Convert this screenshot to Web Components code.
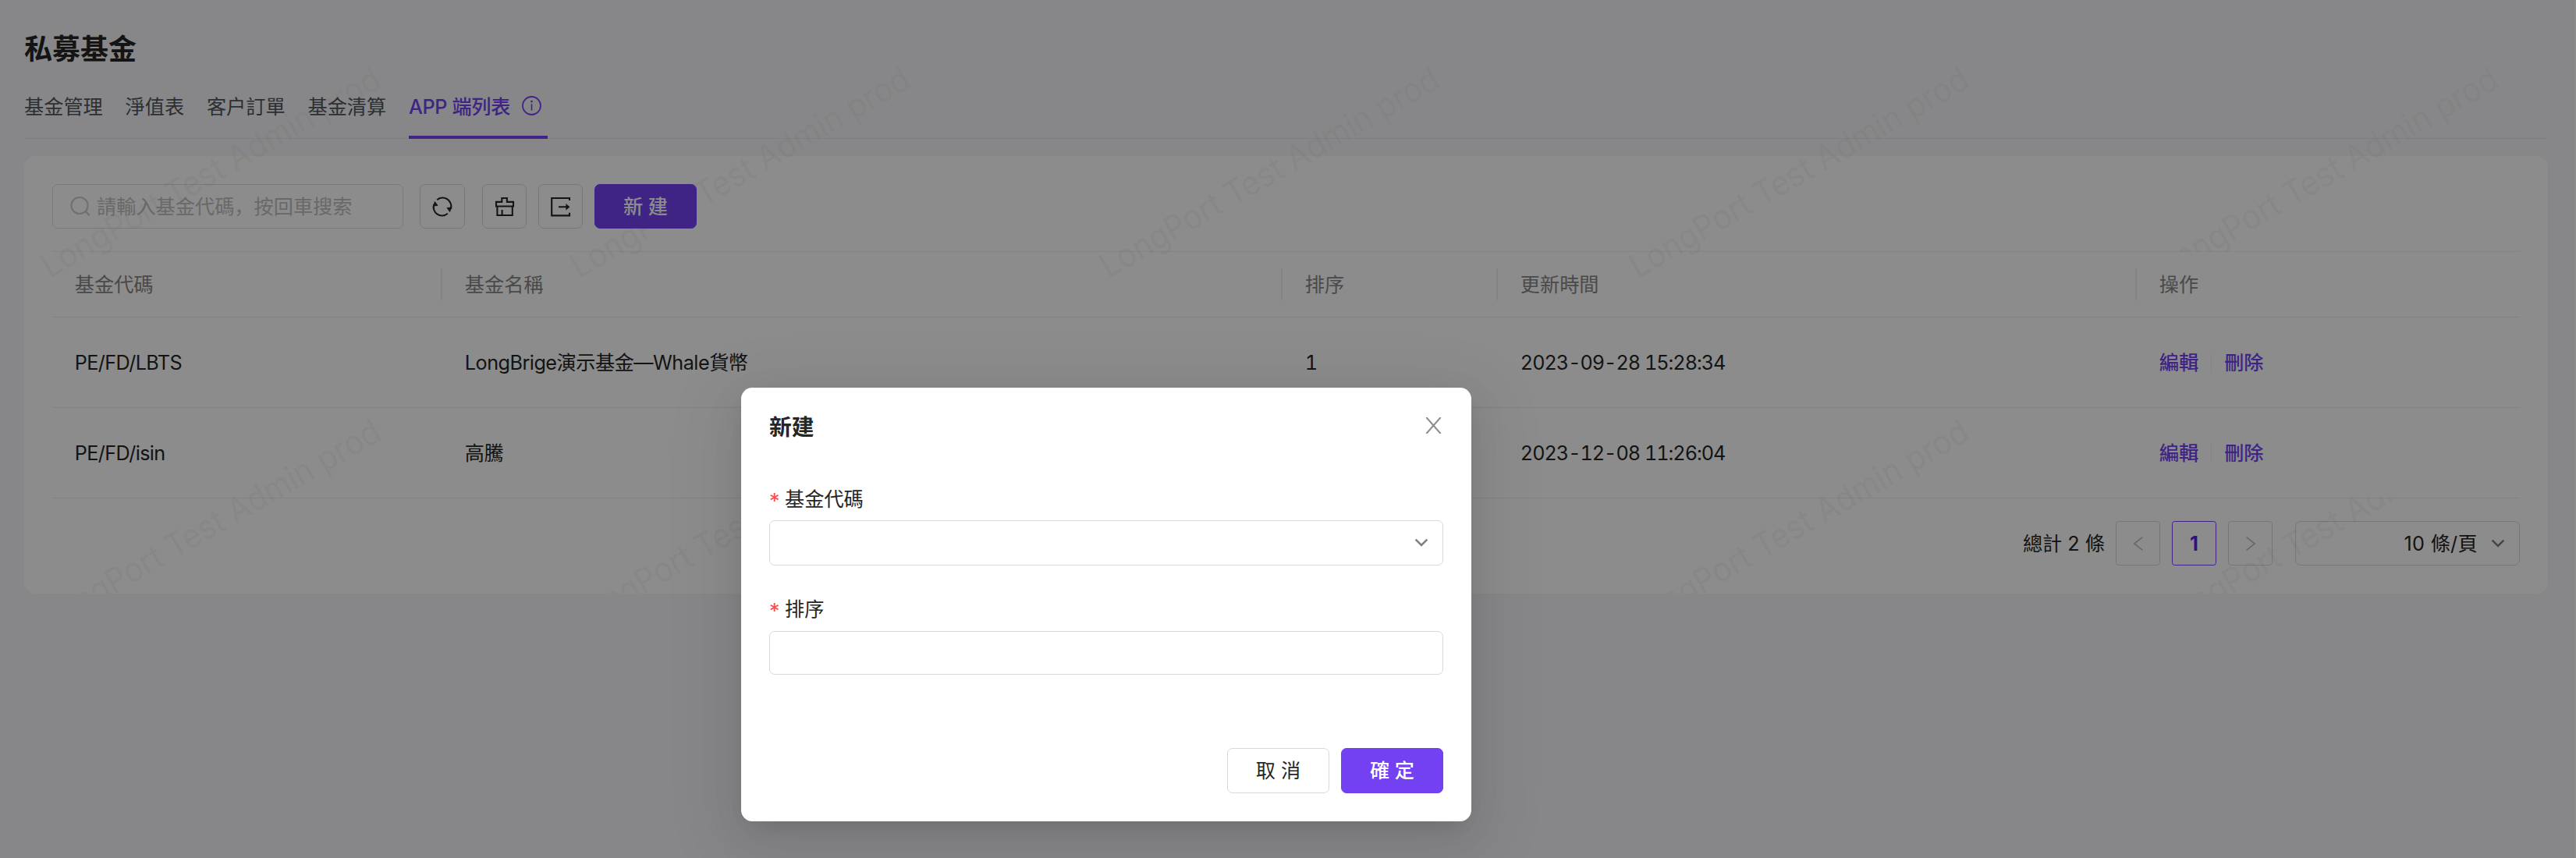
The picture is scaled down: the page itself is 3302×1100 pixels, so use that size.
<!DOCTYPE html>
<html lang="zh">
<head>
<meta charset="utf-8">
<title>私募基金</title>
<style>
  html, body { margin: 0; height: 1100px; overflow: hidden; }
  body {
    width: 3302px;
    background: #f6f6fa;
    color: #262626;
    font: 400 25.2px/40px Inter, "Noto Sans CJK SC", sans-serif;
    --primary: #7341f2;
    --line: #d9d9d9;
    --split: #f0f0f0;
  }
</style>
</head>
<body>
<fund-page></fund-page>
<app-watermark label="LongPort Test Admin prod"></app-watermark>
<modal-dialog heading="新建">
  <form-field label="基金代碼" kind="select"></form-field>
  <form-field label="排序"></form-field>
  <ui-button slot="footer" tall>取 消</ui-button>
  <ui-button slot="footer" tall primary>確 定</ui-button>
</modal-dialog>

<script>
const define = (name, html) => customElements.define(name, class extends HTMLElement {
  constructor() {
    super();
    this.attachShadow({ mode: 'open' });
  }
  connectedCallback() {
    if (this.shadowRoot.firstChild) return;
    this.shadowRoot.innerHTML = typeof html === 'function' ? html(this) : html;
  }
});

const ICONS = {
  search: `<svg width="26" height="26" viewBox="0 0 26 26" fill="none" stroke="currentColor" stroke-width="2"><circle cx="12" cy="12.5" r="10.6"/><path d="M18.8 19.2 24.6 25" stroke-width="2.4"/></svg>`,
  refresh: `<svg width="28" height="28" viewBox="0 0 28 28" fill="none" stroke="currentColor" stroke-width="2.1"><path d="M7.2 5.2A11 11 0 0 1 24.8 17"/><path d="M20.8 22.8A11 11 0 0 1 3.2 11"/><path d="M4.4 7.4 8 12.4 2.4 13.2ZM23.6 20.6 20 15.6 25.6 14.8Z" fill="currentColor" stroke-width=".8"/></svg>`,
  clear: `<svg width="28" height="28" viewBox="0 0 28 28" fill="none" stroke="currentColor" stroke-width="2.1"><path d="M10.3 7.9V3h6.6v4.9H25v5.6H3V7.9ZM4.4 13.5V25h19.4V13.5M10.6 18v7"/></svg>`,
  export: `<svg width="28" height="28" viewBox="0 0 28 28" fill="none" stroke="currentColor" stroke-width="2.1"><path d="M25 6V3H2.2v22.4H25v-3.6M11 14.3h11"/><path d="M20.6 10.4 25.2 14.3 20.6 18.2Z" fill="currentColor" stroke-width=".4"/></svg>`,
  info: `<svg width="25" height="25" viewBox="0 0 25 25" fill="none" stroke="currentColor" stroke-width="1.8"><circle cx="12.5" cy="12.5" r="11.5"/><path d="M12.5 10.2v8.4" stroke-width="1.6"/><circle cx="12.5" cy="7.1" r="1.3" fill="currentColor" stroke="none"/></svg>`,
  down: `<svg width="18" height="12" viewBox="0 0 18 12" fill="none" stroke="currentColor" stroke-width="2.6"><path d="M1.6 1.6 9 9 16.4 1.6"/></svg>`,
  left: `<svg width="14" height="20" viewBox="0 0 14 20" fill="none" stroke="currentColor" stroke-width="1.7"><path d="M12.4 1.6 1.8 10l10.6 8.4"/></svg>`,
  right: `<svg width="14" height="20" viewBox="0 0 14 20" fill="none" stroke="currentColor" stroke-width="1.7"><path d="M1.6 1.6 12.2 10 1.6 18.4"/></svg>`,
  close: `<svg width="21" height="21" viewBox="0 0 21 21" fill="none" stroke="currentColor" stroke-width="2"><path d="M1.3 0 19.7 21M19.7 0 1.3 21"/></svg>`
};

define('ui-icon', el => `<style>:host{display:inline-flex;flex:none}svg{display:block}</style>${ICONS[el.getAttribute('name')]}`);

define('ui-button', `
<style>
  :host { display: flex; align-items: center; justify-content: center; box-sizing: border-box; width: 131px; height: 57px;
    border: 1px solid var(--line); border-radius: 7px; background: #fff; flex: none; white-space: pre; }
  :host([icon]) { width: 57px; }
  :host([tall]) { height: 58px; }
  :host([primary]) { background: var(--primary); border-color: var(--primary); color: #fff; font-weight: 500; }
</style><slot></slot>`);

define('search-box', el => `
<style>
  :host { display: flex; align-items: center; box-sizing: border-box; width: 450px; height: 57px; padding-left: 22px; gap: 8px;
    border: 1px solid #dedede; border-radius: 7px; background: #fff; color: #bfbfbf; }
  ui-icon { color: #c9cad6; margin-top: -1px; }
</style><ui-icon name="search"></ui-icon><span>${el.getAttribute('placeholder')}</span>`);

define('tab-item', `
<style>
  :host { display: flex; align-items: center; box-sizing: border-box; height: 78px; color: #50565c; border-bottom: 4px solid transparent; }
  :host([active]) { width: 178px; color: var(--primary); border-color: var(--primary); font-weight: 500; letter-spacing: -.35px; white-space: nowrap; }
</style><slot></slot>`);

define('tab-bar', `
<style>
  :host { display: flex; gap: 28.8px; height: 78px; box-shadow: inset 0 -1px #e6e6e9; }
</style><slot></slot>`);

define('row-actions', `
<style>
  :host { display: flex; align-items: center; color: var(--primary); font-weight: 500; }
  i { width: 1px; height: 24px; margin: 0 16px; background: var(--split); }
</style><span>編輯</span><i></i><span>刪除</span>`);

define('table-cell', `
<style>
  :host { display: flex; align-items: center; box-sizing: border-box; padding-left: 28.8px; white-space: nowrap; }
  :host([code]) { letter-spacing: -.6px; }
  :host([name]) { letter-spacing: -.5px; }
  :host([num]) { font-variant-numeric: tabular-nums; }
  :host([date]) { font-variant-numeric: tabular-nums; letter-spacing: -1px; }
  :host([op]) { position: relative; z-index: 2; background: #fff; }
  :host([sep])::after { content: ""; width: 2px; height: 41px; margin-left: auto; background: #eeeeee; }
</style><slot></slot>`);

define('table-row', `
<style>
  :host { display: grid; grid-template-columns: 500px 1077px 276px 819px 1fr; height: 115px; border-bottom: 1px solid #ededed; }
  :host([head]) { height: 83px; border-top: 1px solid var(--split); color: #888; }
</style><slot></slot>`);

define('page-pagination', `
<style>
  :host { display: flex; justify-content: flex-end; align-items: center; height: 57px; margin-top: 29px; }
  .total { margin-right: 14px; }
  .pg { display: flex; align-items: center; justify-content: center; box-sizing: border-box; width: 57px; height: 57px;
    margin-right: 15px; border: 1px solid var(--line); border-radius: 3.6px; color: #bfbfbf; }
  .on { border-color: var(--primary); color: #5722f0; font-weight: 700; }
  .size { display: flex; align-items: center; justify-content: flex-end; box-sizing: border-box; width: 288px; height: 57px;
    margin-left: 14px; padding-right: 18px; gap: 17px; border: 1px solid var(--line); border-radius: 7px; letter-spacing: .3px; }
  .size ui-icon { color: #808080; }
</style>
<span class="total">總計 2 條</span>
<span class="pg"><ui-icon name="left"></ui-icon></span>
<span class="pg on">1</span>
<span class="pg"><ui-icon name="right"></ui-icon></span>
<span class="size"><span>10 條/頁</span><ui-icon name="down"></ui-icon></span>`);

define('fund-page', `
<style>
  :host { display: block; box-sizing: border-box; height: 1100px; padding: 36px 34px 0 31px; border-right: 2px solid #fff; }
  h1 { margin: 0 0 10px; font-size: 36px; line-height: 54px; font-weight: 600; }
  tab-item ui-icon { margin: -3px 0 0 15px; }
  .card { box-sizing: border-box; height: 561px; margin-top: 22px; padding: 36px; border-radius: 14.4px; background: #fff; }
  .tools { display: flex; margin-bottom: 29px; }
  .tools ui-button { margin-left: 15px; }
  .tools ui-button.reload { width: 58px; margin-left: 21px; }
  .tools ui-button.clear { margin-left: 22px; }
</style>
<h1>私募基金</h1>
<tab-bar>
  <tab-item>基金管理</tab-item><tab-item>淨值表</tab-item><tab-item>客户訂單</tab-item><tab-item>基金清算</tab-item>
  <tab-item active>APP 端列表<ui-icon name="info"></ui-icon></tab-item>
</tab-bar>
<div class="card">
  <div class="tools">
    <search-box placeholder="請輸入基金代碼，按回車搜索"></search-box>
    <ui-button icon class="reload"><ui-icon name="refresh"></ui-icon></ui-button>
    <ui-button icon class="clear"><ui-icon name="clear"></ui-icon></ui-button>
    <ui-button icon><ui-icon name="export"></ui-icon></ui-button>
    <ui-button primary>新 建</ui-button>
  </div>
  <table-row head>
    <table-cell sep>基金代碼</table-cell><table-cell sep>基金名稱</table-cell><table-cell sep>排序</table-cell><table-cell sep>更新時間</table-cell><table-cell op>操作</table-cell>
  </table-row>
  <table-row>
    <table-cell code>PE/FD/LBTS</table-cell><table-cell name>LongBrige演示基金—Whale貨幣</table-cell><table-cell num>1</table-cell><table-cell date>2023-09-28 15:28:34</table-cell><table-cell op><row-actions></row-actions></table-cell>
  </table-row>
  <table-row>
    <table-cell code>PE/FD/isin</table-cell><table-cell name>高騰</table-cell><table-cell num></table-cell><table-cell date>2023-12-08 11:26:04</table-cell><table-cell op><row-actions></row-actions></table-cell>
  </table-row>
  <page-pagination></page-pagination>
</div>`);

define('app-watermark', el => {
  let marks = '';
  for (let row = 0; row < 2; row++)
    for (let col = 0; col < 5; col++)
      marks += `<text transform="translate(${63.5 + col * 678.6} ${357.5 + row * 452}) rotate(-30)" textLength="494" lengthAdjust="spacingAndGlyphs">${el.getAttribute('label')}</text>`;
  return `
<style>
  :host { display: block; position: absolute; left: 0; top: 0; width: 3300px; height: 761px; overflow: hidden; z-index: 1; pointer-events: none; }
  text { font: 43.2px Inter, sans-serif; fill: rgba(120,118,100,.075); }
</style><svg width="3300" height="761">${marks}</svg>`;
});

define('form-field', el => `
<style>
  :host { display: block; }
  label { display: flex; align-items: center; height: 40px; gap: 7px; }
  b { width: 13px; font-weight: 400; color: #ff4d4f; font-size: 27px; height: 34px; }
  .box { display: flex; align-items: center; justify-content: flex-end; box-sizing: border-box; height: 56px; margin-top: 8px;
    padding-right: 18px; border: 1px solid var(--line); border-radius: 7px; color: #808080; }
  :host([kind=select]) .box { height: 58px; margin-top: 7px; }
</style>
<label><b>*</b><span>${el.getAttribute('label')}</span></label>
<div class="box">${el.getAttribute('kind') === 'select' ? '<ui-icon name="down"></ui-icon>' : ''}</div>`);

define('modal-dialog', el => `
<style>
  :host { display: block; position: absolute; inset: 0; z-index: 10; background: rgba(0,0,0,.45); }
  .panel { position: absolute; left: 950px; top: 497px; width: 936px; height: 556px; box-sizing: border-box; padding: 31px 36px 36px;
    display: flex; flex-direction: column; border-radius: 14.4px; background: #fff;
    box-shadow: 0 11px 29px -14px rgba(0,0,0,.12), 0 16px 50px rgba(0,0,0,.08), 0 22px 86px 29px rgba(0,0,0,.05); }
  header { display: flex; justify-content: space-between; align-items: center; height: 40px; margin-bottom: 52px; font-size: 28.8px; font-weight: 600; }
  header ui-icon { color: #8c8c8c; margin: -5px 2px 0 0; }
  .fields { display: flex; flex-direction: column; gap: 36px; }
  footer { display: flex; justify-content: flex-end; gap: 15px; margin-top: auto; }
</style>
<div class="panel">
  <header><span>${el.getAttribute('heading')}</span><ui-icon name="close"></ui-icon></header>
  <div class="fields"><slot></slot></div>
  <footer><slot name="footer"></slot></footer>
</div>`);
</script>
</body>
</html>
